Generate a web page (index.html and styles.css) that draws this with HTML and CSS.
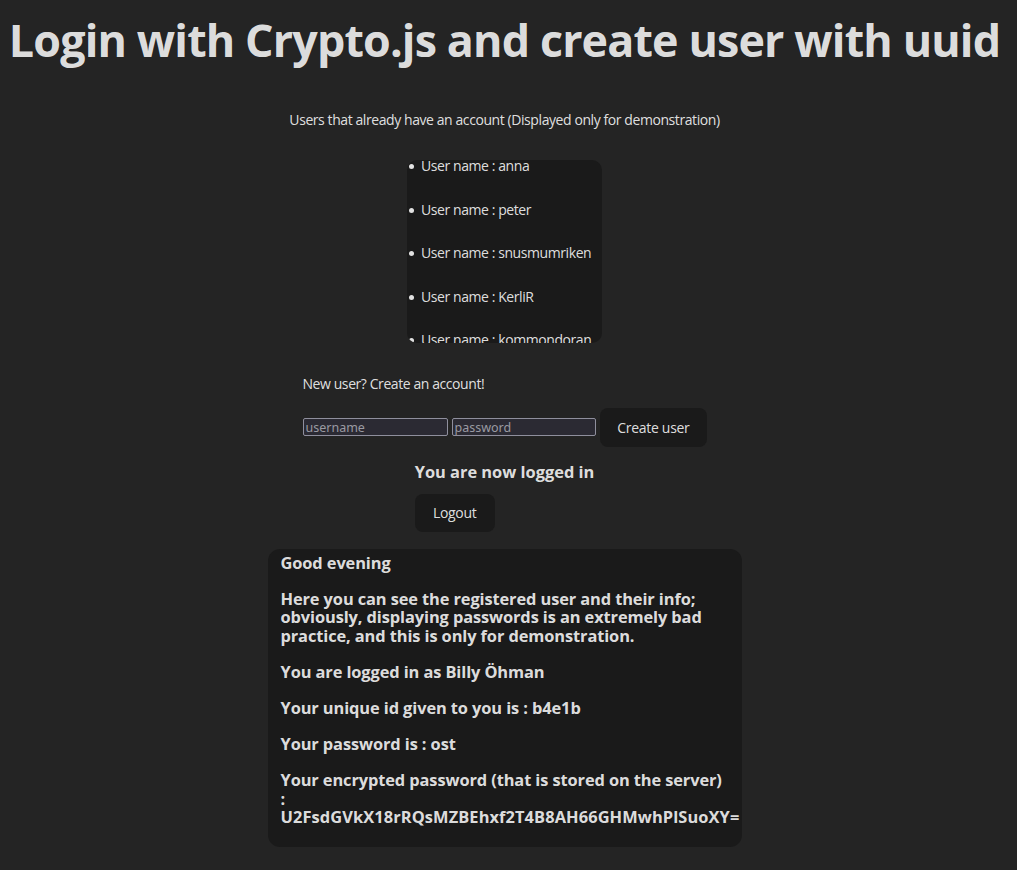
FILE: index.html
```html
<!DOCTYPE html>
<html lang="en">
<head>
<meta charset="utf-8">
<title>Login with Crypto.js</title>
<link rel="stylesheet" href="styles.css">
</head>
<body>
<div class="app">
  <h1 class="title">Login with Crypto.js and create user with uuid</h1>
  <p class="intro">Users that already have an account (Displayed only for demonstration)</p>
  <div class="users">
    <ul class="user-list">
      <li>User name : anna</li>
      <li>User name : peter</li>
      <li>User name : snusmumriken</li>
      <li>User name : KerliR</li>
      <li>User name : kommondoran</li>
    </ul>
  </div>
  <div class="create">
    <p class="create-label">New user? Create an account!</p>
    <div class="create-row">
      <input class="field" type="text" placeholder="username">
      <input class="field" type="password" placeholder="password">
      <button class="btn">Create user</button>
    </div>
  </div>
  <div class="status">
    <h3 class="status-title">You are now logged in</h3>
    <button class="btn">Logout</button>
  </div>
  <div class="info">
    <p>Good evening</p>
    <p>Here you can see the registered user and their info;<br>obviously, displaying passwords is an extremely bad<br>practice, and this is only for demonstration.</p>
    <p>You are logged in as Billy Öhman</p>
    <p>Your unique id given to you is : b4e1b</p>
    <p>Your password is : ost</p>
    <p>Your encrypted password (that is stored on the server)<br>:<br><span class="cipher">U2FsdGVkX18rRQsMZBEhxf2T4B8AH66GHMwhPlSuoXY=</span></p>
  </div>
</div>
</body>
</html>
```
FILE: styles.css
```css
html, body {
  margin: 0;
  padding: 0;
  background: #242424;
}
body {
  color: rgba(255, 255, 255, 0.87);
  font-family: "Open Sans", "Noto Sans", sans-serif;
  font-size: 14px;
  line-height: 1.5;
  letter-spacing: -0.42px;
  min-height: 870px;
}
.app {
  width: 1009px;
  text-align: center;
  padding-bottom: 20px;
}
.title {
  margin: 14.7px 0 0;
  font-size: 44.8px;
  line-height: 1.1;
  font-weight: 700;
  letter-spacing: -0.85px;
  white-space: nowrap;
}
.intro {
  margin: 45.5px 0 0;
  line-height: 21px;
}
.users {
  width: 195px;
  height: 183px;
  margin: 29.5px auto 0;
  background: #1a1a1a;
  border-radius: 10px;
  overflow: hidden;
  text-align: left;
}
.user-list {
  list-style: none;
  margin: -4.5px 0 0;
  padding: 0 0 0 1.5px;
}
.user-list li {
  line-height: 21px;
  margin-bottom: 22.5px;
  white-space: nowrap;
}
.user-list li::before {
  content: "";
  display: inline-block;
  width: 5px;
  height: 5px;
  border-radius: 50%;
  background: currentColor;
  margin-right: 7.5px;
  vertical-align: middle;
  position: relative;
  top: -1px;
}
.create {
  width: 404px;
  margin: 30.5px auto 0;
  text-align: left;
}
.create-label {
  margin: 0;
  line-height: 21px;
}
.create-row {
  display: flex;
  align-items: center;
  gap: 4px;
  margin-top: 13.5px;
}
.field {
  box-sizing: border-box;
  width: 145px;
  height: 18px;
  margin: 0;
  padding: 0 2px;
  background: #2b2a33;
  border: 1px solid #8f8f9d;
  border-radius: 2px;
  color: #fbfbfe;
  font-family: "Noto Sans", "DejaVu Sans", sans-serif;
  font-size: 12.5px;
  line-height: 16px;
  letter-spacing: 0;
}
.field + .field {
  width: 144px;
}
.field::placeholder {
  color: #9a9aa2;
  opacity: 1;
}
.btn {
  box-sizing: border-box;
  height: 39px;
  border-radius: 8px;
  border: 1px solid transparent;
  padding: 0 16.8px;
  font-size: 14px;
  line-height: 21px;
  font-weight: 400;
  font-family: inherit;
  letter-spacing: -0.3px;
  white-space: nowrap;
  background: #1a1a1a;
  color: rgba(255, 255, 255, 0.87);
  cursor: pointer;
}
.create-row .btn {
  width: 107px;
}
.status {
  width: fit-content;
  margin: 12.7px auto 0;
  text-align: left;
}
.status-title {
  margin: 0;
  font-size: 16.4px;
  line-height: 24.6px;
  font-weight: 700;
  letter-spacing: 0;
}
.status .btn {
  width: 80px;
  height: 38px;
  padding-left: 0;
  padding-right: 0;
  margin-top: 9.4px;
}
.info {
  width: 474px;
  box-sizing: border-box;
  margin: 17px auto 0;
  padding: 5px 13px 3px;
  background: #1a1a1a;
  border-radius: 12px;
  overflow: hidden;
  text-align: left;
  font-size: 16.4px;
  font-weight: 700;
  line-height: 18.4px;
  letter-spacing: -0.1px;
}
.info p {
  margin: 0 0 17.8px;
}
.cipher {
  white-space: nowrap;
  letter-spacing: 0.1px;
}
```
